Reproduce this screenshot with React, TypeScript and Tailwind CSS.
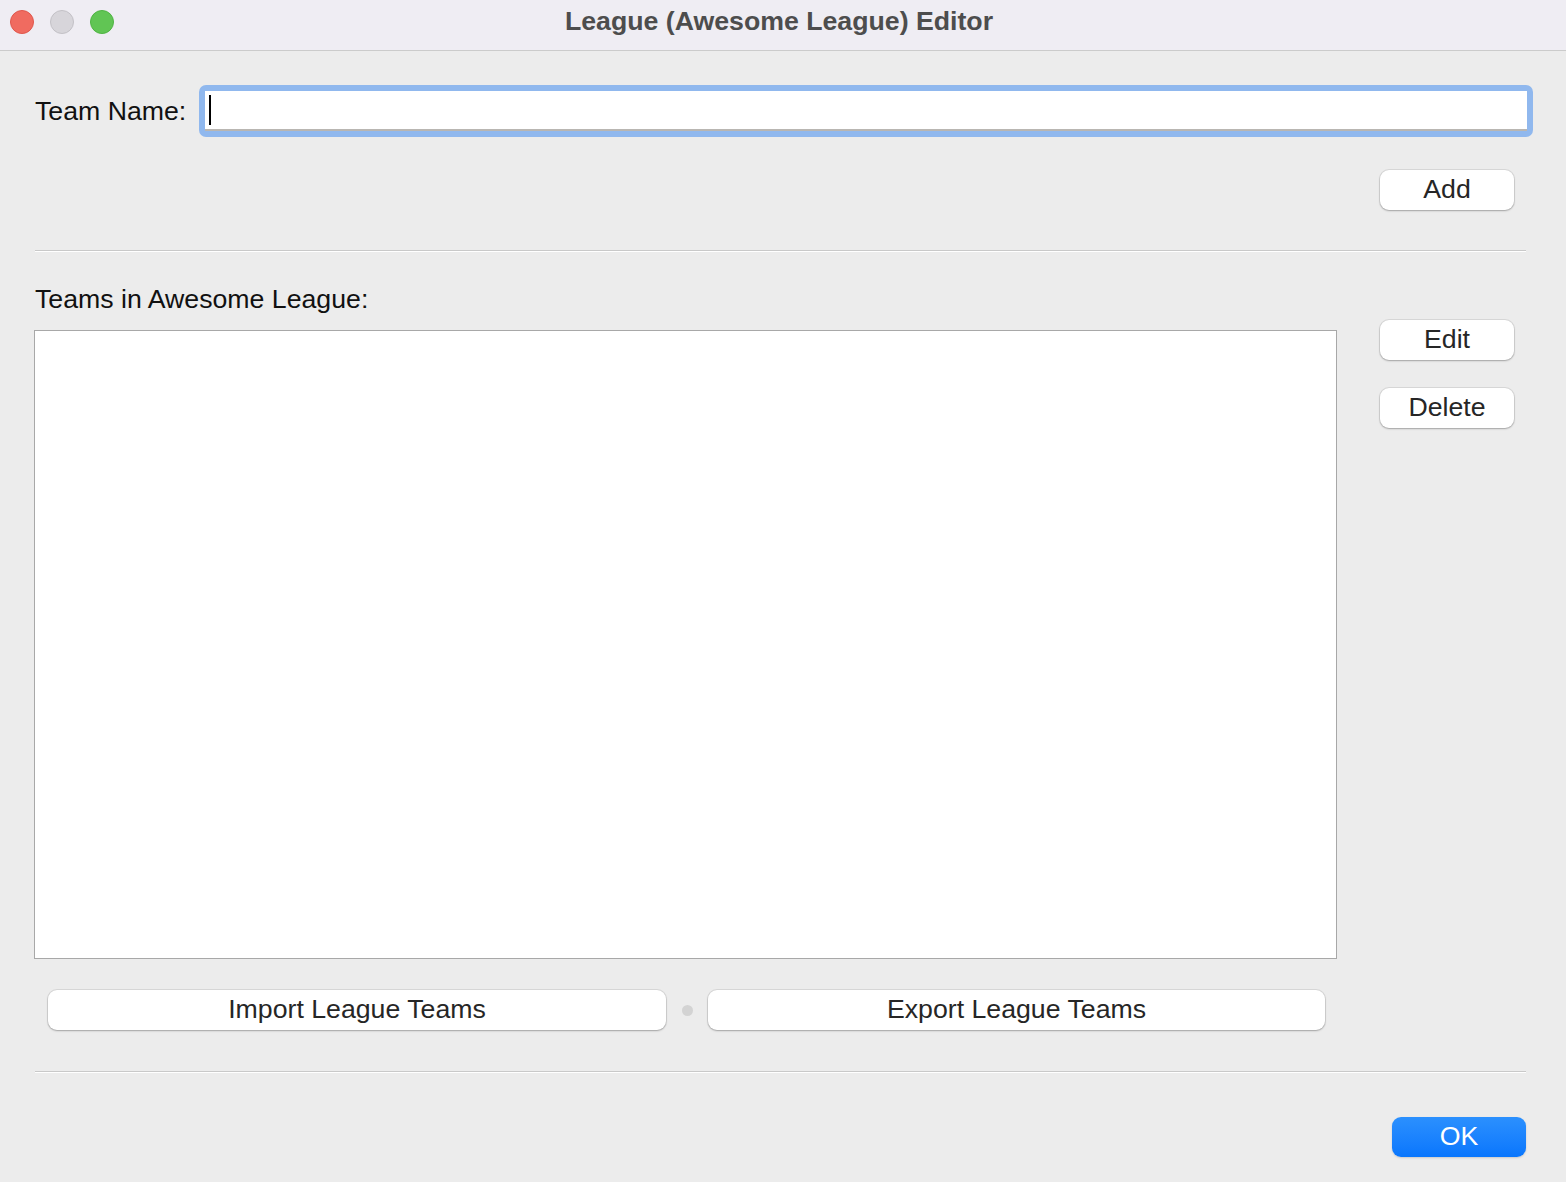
import React from 'react';

const font = "font-['Liberation_Sans',Arial,sans-serif]";

const MacButton: React.FC<{ label: string; className?: string }> = ({ label, className = '' }) => (
  <button
    className={`h-[40px] rounded-[9px] bg-white pb-[2px] text-[26.7px] leading-none text-[#262626] shadow-[0_0_0_1px_rgba(0,0,0,0.08),0_1px_2px_rgba(0,0,0,0.25)] ${className}`}
  >
    {label}
  </button>
);

const Separator: React.FC = () => (
  <div className="h-[2px] border-t border-[#c9c9c9] bg-white" />
);

const App: React.FC = () => {
  return (
    <div className={`flex h-[1182px] w-[1566px] flex-col overflow-hidden bg-[#ececec] ${font}`}>
      {/* title bar */}
      <div className="grid h-[51px] shrink-0 grid-cols-[1fr_auto_1fr] items-center border-b border-[#cbcbcb] bg-[#efedf3]">
        <div className="flex items-center gap-[16px] pl-[10px] pb-[6px]">
          <span className="h-[24px] w-[24px] rounded-full border border-[#e0574c] bg-[#f06b60]" />
          <span className="h-[24px] w-[24px] rounded-full border border-[#c3c1c6] bg-[#d7d5da]" />
          <span className="h-[24px] w-[24px] rounded-full border border-[#4fb443] bg-[#61c554]" />
        </div>
        <div className="pb-[7px] pr-[8px] text-[26.7px] font-bold text-[#4d4d4d]">League (Awesome League) Editor</div>
        <div />
      </div>

      <div className="flex flex-1 flex-col pl-[35px] pr-[40px]">
        {/* team name row */}
        <div className="mt-[34px] flex h-[52px] items-center">
          <span className="text-[26.7px] text-[#111]">Team Name:</span>
          <div className="ml-[13px] mr-[-7px] h-[52px] flex-1 rounded-[7px] bg-[#90b8ee] p-[6px]">
            <div className="flex h-full items-center border-b-2 border-[#b9b6b2] bg-white pl-[4px]">
              <span className="h-[30px] w-[2px] bg-black" />
            </div>
          </div>
        </div>

        <div className="mt-[33px] flex justify-end pr-[12px]">
          <MacButton label="Add" className="w-[134px]" />
        </div>

        <div className="mt-[40px]">
          <Separator />
        </div>

        <div className="mt-[32px] text-[26.7px] leading-[30px] text-[#111]">Teams in Awesome League:</div>

        <div className="mt-[6px] flex items-start">
          <div className="ml-[-1px] mt-[10px] h-[629px] w-[1303px] border border-[#a8a8a8] bg-white" />
          <div className="ml-auto mr-[12px] flex flex-col gap-[28px]">
            <MacButton label="Edit" className="w-[134px]" />
            <MacButton label="Delete" className="w-[134px]" />
          </div>
        </div>

        <div className="ml-[13px] mt-[31px] flex items-center">
          <MacButton label="Import League Teams" className="w-[618px]" />
          <div className="flex w-[42px] justify-center">
            <span className="h-[11px] w-[11px] rounded-full bg-[#d3d3d3]" />
          </div>
          <MacButton label="Export League Teams" className="w-[617px]" />
        </div>

        <div className="mt-[41px]">
          <Separator />
        </div>

        <div className="mt-[44px] flex justify-end">
          <button className="h-[40px] w-[134px] rounded-[9px] bg-gradient-to-b from-[#2b90fe] to-[#0876fd] pb-[2px] text-[26.7px] leading-none text-white shadow-[0_1px_2px_rgba(0,0,0,0.15)]">
            OK
          </button>
        </div>
      </div>
    </div>
  );
};

export default App;
